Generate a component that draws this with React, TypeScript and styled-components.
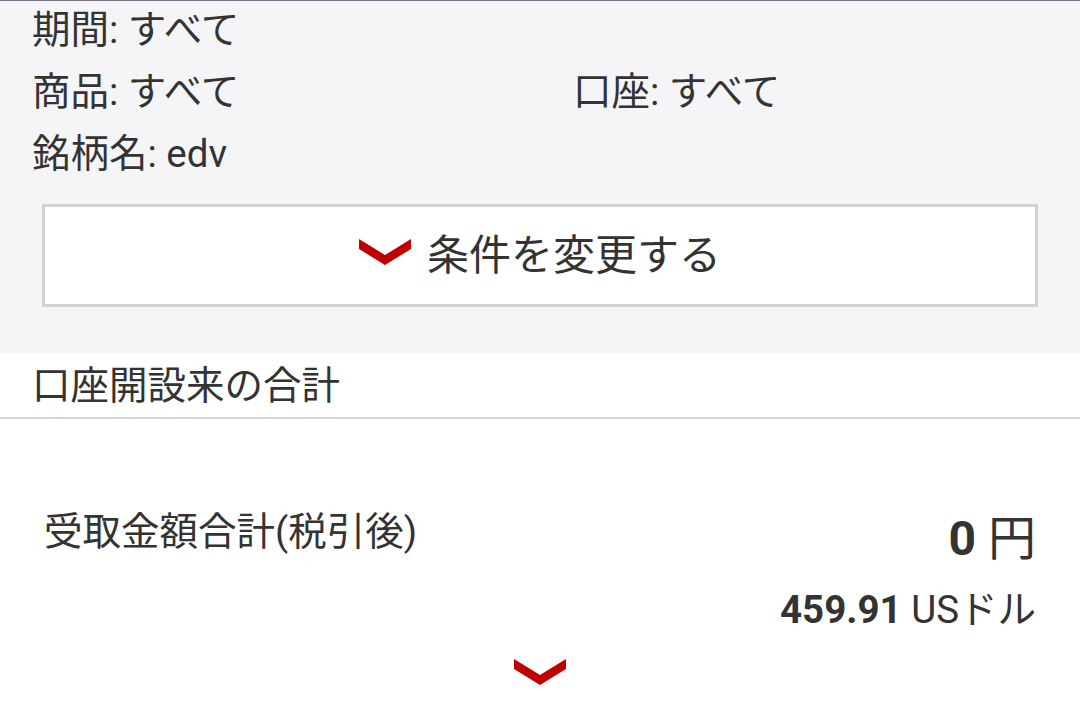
import React from "react";
import styled, { createGlobalStyle } from "styled-components";

const Global = createGlobalStyle`
  html, body { margin: 0; padding: 0; background: #ffffff; }
  body {
    font-family: Roboto, "Noto Sans CJK JP", sans-serif;
    color: #333333;
    -webkit-font-smoothing: antialiased;
  }
`;

const Page = styled.div`
  width: 1080px;
  height: 718px;
  overflow: hidden;
  background: #ffffff;
`;

const FilterPanel = styled.section`
  background: #f5f5f7;
  border-top: 1px solid #75737f;
  padding: 0 0 46px 0;
`;

const FilterGrid = styled.div`
  display: grid;
  grid-template-columns: 541px 1fr;
  padding-left: 32px;
`;

const FilterItem = styled.div<{ $full?: boolean }>`
  grid-column: ${(p) => (p.$full ? "1 / -1" : "auto")};
  font-size: 38.5px;
  line-height: 62px;
  height: 62px;
  margin-top: -2px;
  margin-bottom: 2px;
  white-space: nowrap;
`;

const ChangeButton = styled.button`
  display: flex;
  align-items: center;
  justify-content: center;
  gap: 16px;
  box-sizing: border-box;
  width: 996px;
  height: 103px;
  margin: 17px 42px 0 42px;
  background: #ffffff;
  border: 3px solid #d2d2d2;
  font-family: Roboto, "Noto Sans CJK JP", sans-serif;
  font-size: 42px;
  color: #333333;
  padding: 0 0 8px 0;
`;

const Chevron = styled.svg`
  display: block;
  flex: none;
`;

const SummaryHeader = styled.div`
  height: 66px;
  display: flex;
  align-items: center;
  padding-left: 32px;
  padding-bottom: 6px;
  box-sizing: border-box;
  font-size: 38.5px;
  border-bottom: 2px solid #d4d4d4;
`;

const SummaryBody = styled.div`
  padding: 88px 44px 0 44px;
  display: flex;
  flex-direction: column;
  align-items: stretch;
`;

const AmountRow = styled.div`
  display: flex;
  justify-content: space-between;
  align-items: flex-start;
`;

const Label = styled.div`
  font-size: 38.5px;
  line-height: 50px;
`;

const Amounts = styled.div`
  display: flex;
  flex-direction: column;
  align-items: flex-end;
`;

const Amount = styled.div<{ $size: number; $lh: number }>`
  font-size: ${(p) => p.$size}px;
  line-height: ${(p) => p.$lh}px;
  white-space: nowrap;
`;

const Num = styled.span`
  font-weight: 700;
`;

const Unit = styled.span`
  font-weight: 400;
`;

const MoreToggle = styled.div`
  display: flex;
  justify-content: center;
  margin-top: 10px;
`;

const ChevronIcon = () => (
  <Chevron width="52" height="26" viewBox="0 0 52 26">
    <polygon points="0,0 26,16 52,0 52,10 26,26 0,10" fill="#c00000" />
  </Chevron>
);

export default function App() {
  return (
    <Page>
      <Global />
      <FilterPanel>
        <FilterGrid>
          <FilterItem $full>期間: すべて</FilterItem>
          <FilterItem>商品: すべて</FilterItem>
          <FilterItem>口座: すべて</FilterItem>
          <FilterItem $full>銘柄名: edv</FilterItem>
        </FilterGrid>
        <ChangeButton type="button">
          <ChevronIcon />
          <span>条件を変更する</span>
        </ChangeButton>
      </FilterPanel>
      <SummaryHeader>口座開設来の合計</SummaryHeader>
      <SummaryBody>
        <AmountRow>
          <Label>受取金額合計(税引後)</Label>
          <Amounts>
            <Amount $size={48} $lh={64}>
              <Num>0</Num> <Unit>円</Unit>
            </Amount>
            <Amount $size={38.5} $lh={78}>
              <Num>459.91</Num> <Unit>USドル</Unit>
            </Amount>
          </Amounts>
        </AmountRow>
        <MoreToggle>
          <ChevronIcon />
        </MoreToggle>
      </SummaryBody>
    </Page>
  );
}
